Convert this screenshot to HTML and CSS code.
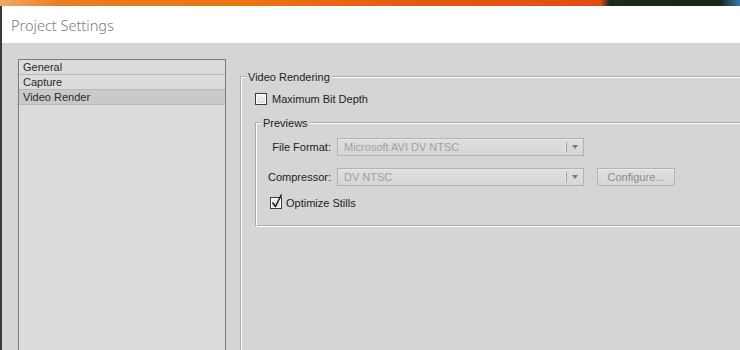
FILE: index.html
```html
<!DOCTYPE html>
<html lang="en">
<head>
  <meta charset="UTF-8">
  <title>Project Settings</title>
  <link rel="stylesheet" href="styles.css">
</head>
<body>
  <div class="window">
    <div class="titlebar">Project Settings</div>
    <div class="content">
      <!-- category list -->
      <ul class="list">
        <li>General</li>
        <li>Capture</li>
        <li class="selected">Video Render</li>
      </ul>

      <!-- Video Rendering panel -->
      <fieldset class="group main">
        <legend>Video Rendering</legend>
        <label class="check">
          <span class="box"></span>
          Maximum Bit Depth
        </label>

        <fieldset class="group previews">
          <legend>Previews</legend>
          <div class="rows">
            <span class="label">File Format:</span>
            <div class="select">
              <span class="value">Microsoft AVI DV NTSC</span>
              <span class="arrow"></span>
            </div>
            <span></span>

            <span class="label">Compressor:</span>
            <div class="select">
              <span class="value">DV NTSC</span>
              <span class="arrow"></span>
            </div>
            <button class="btn" disabled>Configure...</button>
          </div>
          <label class="check optimize">
            <span class="box">
              <svg width="14" height="16" viewBox="0 0 14 16"><path d="M2.5 9.5 L5.5 13.5 L11.5 1.5" fill="none" stroke="#111" stroke-width="1.4"/></svg>
            </span>
            Optimize Stills
          </label>
        </fieldset>
      </fieldset>
    </div>
  </div>
</body>
</html>
```
FILE: styles.css
```css
body {
  margin: 0;
  height: 350px;
  overflow: hidden;
  font-family: "Liberation Sans", Arial, sans-serif;
  font-size: 11px;
  color: #1c1c1c;
  background:
    linear-gradient(90deg, #f0a868 0, #ea7d22 60px, #ec7412 250px, #e65812 420px, #e24e10 600px, #1e2a1c 610px, #1a2418 720px, #3a78b0 740px) 0 0 / 100% 6px no-repeat,
    #3a3a3a;
  padding: 6px 0 0 2px;
  box-sizing: border-box;
}

.window {
  height: 100%;
  display: flex;
  flex-direction: column;
  overflow: hidden;
}

.titlebar {
  height: 37px;
  flex: none;
  box-sizing: border-box;
  padding: 2px 0 0 9px;
  background: #fff;
  color: #7c7c7c;
  font-family: "Noto Sans", "Open Sans", sans-serif;
  font-weight: 300;
  font-size: 14.5px;
  line-height: 34px;
}

.content {
  flex: 1;
  background: #d5d5d5;
  display: flex;
  align-items: flex-start;
  padding: 16px 0 0 16px;
}

.list {
  flex: none;
  list-style: none;
  margin: 0;
  padding: 0;
  width: 206px;
  height: 400px;
  border: 1px solid #7c7c7c;
  background: #dcdcdc;
}

.list li {
  height: 14px;
  line-height: 14px;
  padding-left: 4px;
  color: #2a2a2a;
  border-bottom: 1px solid #b9b9b9;
}

.list li.selected {
  background: #c9c9c9;
}

.group {
  margin: 0;
  border: 2px groove #fff;
  min-width: 0;
}

.group legend {
  padding: 0 2px;
  line-height: 14px;
}

.main {
  flex: none;
  margin: 11px 0 0 14px;
  width: 560px;
  height: 400px;
  padding: 8px 0 0 4px;
}

.previews {
  margin: 11px 0 0 9px;
  padding: 8px 0 16px 4px;
}

.check {
  display: flex;
  align-items: center;
  gap: 5px;
  height: 13px;
  margin-left: 9px;
}

.box {
  position: relative;
  width: 10px;
  height: 10px;
  border: 1px solid #3c3c3c;
  background: linear-gradient(#f2f2f2, #dcdcdc);
  box-shadow: inset 0 0 0 1px #fff;
}

.box svg {
  position: absolute;
  left: -1px;
  top: -5px;
}

.optimize {
  margin: 10px 0 0 9px;
  gap: 4px;
}

.rows {
  display: grid;
  grid-template-columns: 70px 247px 78px;
  column-gap: 6px;
  row-gap: 12px;
  align-items: center;
}

.rows .btn {
  margin-left: 7px;
}

.label {
  text-align: right;
  color: #222;
}

.select {
  height: 16px;
  border: 1px solid #b3b3b3;
  background: linear-gradient(#dedede, #d6d6d6);
  display: flex;
  align-items: center;
  box-shadow: inset 0 1px 0 #e6e6e6;
}

.value {
  flex: 1;
  padding-left: 6px;
  color: #a0a0a0;
}

.arrow {
  width: 16px;
  height: 10px;
  border-left: 1px solid #9c9c9c;
  box-shadow: -1px 0 0 #ececec;
  display: flex;
  align-items: center;
  justify-content: center;
}

.arrow::after {
  content: "";
  border-top: 4px solid #7a7a7a;
  border-left: 3.5px solid transparent;
  border-right: 3.5px solid transparent;
}

.btn {
  height: 18px;
  width: 78px;
  padding: 0;
  font: inherit;
  color: #8c8c8c;
  background: linear-gradient(#e0e0e0, #d6d6d6);
  border: 1px solid #b3b3b3;
  box-shadow: inset 0 1px 0 #ececec;
}
```
